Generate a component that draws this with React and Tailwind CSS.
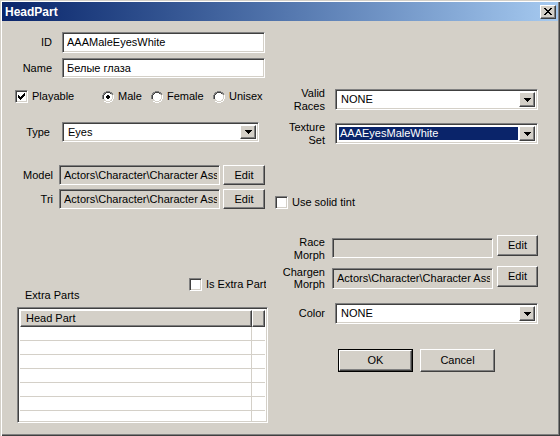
import React from "react";

const sunken =
  "border border-t-[#808080] border-l-[#808080] border-b-white border-r-white shadow-[inset_1px_1px_0_#404040,inset_-1px_-1px_0_#d4d0c8]";
const raised =
  "border border-t-white border-l-white border-b-[#404040] border-r-[#404040] shadow-[inset_-1px_-1px_0_#808080,inset_1px_1px_0_#d4d0c8]";

function TextBox({ className = "", value = "", gray = false }) {
  return (
    <div
      className={`${sunken} ${gray ? "bg-[#d4d0c8]" : "bg-white"} flex items-center pl-[4px] pr-[2px] ${className}`}
    >
      <span className="block w-full overflow-hidden whitespace-nowrap">{value}</span>
    </div>
  );
}

function Arrow() {
  return (
    <svg width="7" height="4" viewBox="0 0 7 4">
      <path d="M0 0h7v1H6v1H5v1H4v1H3V3H2V2H1V1H0z" fill="#000" />
    </svg>
  );
}

function Combo({ className = "", value = "", selected = false }) {
  return (
    <div className={`${sunken} bg-white flex p-[2px] ${className}`}>
      <div className="flex-1 flex items-center overflow-hidden whitespace-nowrap p-[1px]">
        <div
          className={`h-full flex items-center w-full ${selected ? "bg-[#0a246a] text-white pl-[1px]" : "pl-[2px]"}`}
        >
          {value}
        </div>
      </div>
      <div className={`${raised} bg-[#d4d0c8] w-[16px] flex items-center justify-center`}>
        <Arrow />
      </div>
    </div>
  );
}

function Button({ className = "", children, isDefault = false }) {
  if (isDefault) {
    return (
      <div className={`border border-black ${className}`}>
        <div className={`${raised} bg-[#d4d0c8] w-full h-full flex items-center justify-center`}>
          {children}
        </div>
      </div>
    );
  }
  return (
    <div className={`${raised} bg-[#d4d0c8] flex items-center justify-center ${className}`}>
      {children}
    </div>
  );
}

function CheckBox({ checked = false }) {
  return (
    <div className={`${sunken} bg-white w-[13px] h-[13px] shrink-0 flex items-center justify-center`}>
      {checked && (
        <svg width="7" height="7" viewBox="0 0 7 7">
          <path d="M0 2h1v1h1v1h1V3h1V2h1V1h1V0h1v3H6v1H5v1H4v1H3v1H2V6H1V5H0z" fill="#000" />
        </svg>
      )}
    </div>
  );
}

function Radio({ checked = false }) {
  return (
    <svg width="12" height="12" viewBox="0 0 12 12" className="shrink-0">
      <path d="M4 0h4v1h2v1h1v2h-1V3H9V2H8V1H4v1H3v1H2v1H1v4H0V4h1V2h1V1h2z" fill="#808080" />
      <path d="M4 1h4v1h1v1H8V2H4v1H3v1H2v4H1V4h1V3h1V2h1z" fill="#404040" />
      <path d="M11 4h1v4h-1v2h-1v1H8v1H4v-1H2v-1h2v1h4v-1h2V8h1z" fill="#fff" />
      <path d="M10 4h1v4h-1v1H9v1H8v1H4v-1H3v-1h1v1h4V9h1V8h1z" fill="#d4d0c8" />
      <path d="M4 2h4v1h1v1h1v4H9v1H8v1H4V9H3V8H2V4h1V3h1z" fill="#fff" />
      {checked && <path d="M5 4h2v1h1v2H7v1H5V7H4V5h1z" fill="#000" />}
    </svg>
  );
}

function TwoLine({ a, b, className = "", leading = "leading-[13px]" }) {
  return (
    <div className={`w-[53px] text-right shrink-0 ${leading} ${className}`}>
      <div>{a}</div>
      <div>{b}</div>
    </div>
  );
}

export default function App() {
  const rows = [0, 1, 2, 3, 4, 5, 6];
  const path = "Actors\\Character\\Character Ass";
  return (
    <div
      className="w-[560px] h-[436px] bg-[#d4d0c8] p-[2px] flex flex-col text-[11px] text-black shadow-[inset_1px_1px_0_#d4d0c8,inset_2px_2px_0_#fff,inset_-1px_-1px_0_#404040,inset_-2px_-2px_0_#808080] overflow-hidden"
      style={{ fontFamily: '"Liberation Sans", Arial, sans-serif' }}
    >
      {/* Title bar */}
      <div className="h-[19px] shrink-0 bg-gradient-to-r from-[#0a246a] to-[#a6caf0] flex items-center pl-[3px] pr-[2px]">
        <span className="text-white font-bold text-[12px] flex-1">HeadPart</span>
        <div className={`${raised} bg-[#d4d0c8] w-[16px] h-[14px] flex items-center justify-center`}>
          <svg width="8" height="7" viewBox="0 0 8 7">
            <path d="M0 0h2v1h1v1h2V1h1V0h2v1H7v1H6v1H5v1h1v1h1v1h1v1H6V6H5V5H3v1H2v1H0V6h1V5h1V4h1V3H2V2H1V1H0z" fill="#000" />
          </svg>
        </div>
      </div>

      {/* Body */}
      <div className="flex flex-1">
        {/* Left column */}
        <div className="w-[270px] shrink-0 flex flex-col">
          <div className="flex items-center h-[21px] mt-[11px]">
            <span className="w-[50px] text-right shrink-0">ID</span>
            <TextBox className="ml-[10px] w-[203px] h-full" value="AAAMaleEyesWhite" />
          </div>
          <div className="flex items-center h-[20px] mt-[5px]">
            <span className="w-[50px] text-right shrink-0">Name</span>
            <TextBox className="ml-[10px] w-[203px] h-full" value="Белые глаза" />
          </div>
          <div className="flex items-center h-[13px] mt-[12px]">
            <div className="ml-[13px] w-[87px] flex items-center shrink-0">
              <CheckBox checked />
              <span className="ml-[4px]">Playable</span>
            </div>
            <div className="w-[49px] flex items-center shrink-0">
              <Radio checked />
              <span className="ml-[4px]">Male</span>
            </div>
            <div className="w-[62px] flex items-center shrink-0">
              <Radio />
              <span className="ml-[4px]">Female</span>
            </div>
            <div className="flex items-center shrink-0">
              <Radio />
              <span className="ml-[4px]">Unisex</span>
            </div>
          </div>
          <div className="flex items-center h-[20px] mt-[19px]">
            <span className="w-[48px] text-right shrink-0">Type</span>
            <Combo className="ml-[12px] w-[197px] h-full" value="Eyes" />
          </div>
          <div className="flex items-center h-[20px] mt-[23px]">
            <span className="w-[51px] text-right shrink-0">Model</span>
            <TextBox className="ml-[6px] w-[161px] h-full" gray value={path} />
            <Button className="ml-[3px] w-[42px] h-full">Edit</Button>
          </div>
          <div className="flex items-center h-[20px] mt-[4px]">
            <span className="w-[51px] text-right shrink-0">Tri</span>
            <TextBox className="ml-[6px] w-[161px] h-full" gray value={path} />
            <Button className="ml-[3px] w-[42px] h-full">Edit</Button>
          </div>
          <div className="flex items-center h-[13px] mt-[69px]">
            <div className="ml-[187px] flex items-center">
              <CheckBox />
              <span className="ml-[4px] w-[60px] overflow-hidden whitespace-nowrap">Is Extra Part</span>
            </div>
          </div>
          <div className="h-[13px] leading-[13px] mt-[-2px] ml-[23px]">Extra Parts</div>
          <div className={`${sunken} bg-white ml-[15px] mt-[5px] w-[251px] h-[116px] p-[2px] flex flex-col overflow-hidden`}>
            <div className="flex h-[17px] shrink-0">
              <div className={`${raised} bg-[#d4d0c8] w-[232px] flex items-center pl-[5px]`}>Head Part</div>
              <div className={`${raised} bg-[#d4d0c8] flex-1`} />
            </div>
            {rows.map((r) => (
              <div key={r} className="flex h-[14px] shrink-0 border-b border-[#d4d0c8]">
                <div className="w-[232px] border-r border-[#d4d0c8]" />
                <div className="flex-1" />
              </div>
            ))}
          </div>
        </div>

        {/* Right column */}
        <div className="flex-1 flex flex-col">
          <div className="flex items-center h-[21px] mt-[68px]">
            <TwoLine a="Valid" b="Races" />
            <Combo className="ml-[10px] w-[203px] h-full" value="NONE" />
          </div>
          <div className="flex items-center h-[21px] mt-[13px]">
            <TwoLine a="Texture" b="Set" />
            <Combo className="ml-[10px] w-[203px] h-full" value="AAAEyesMaleWhite" selected />
          </div>
          <div className="flex items-center h-[13px] mt-[52px]">
            <div className="ml-[3px] flex items-center">
              <CheckBox />
              <span className="ml-[4px]">Use solid tint</span>
            </div>
          </div>
          <div className="flex items-start mt-[26px]">
            <TwoLine a="Race" b="Morph" className="mt-[1px]" />
            <TextBox className="ml-[7px] mt-[3px] w-[161px] h-[20px]" gray value="" />
            <Button className="ml-[4px] w-[41px] h-[21px]">Edit</Button>
          </div>
          <div className="flex items-start mt-[4px]">
            <TwoLine a="Chargen" b="Morph" leading="leading-[12px]" />
            <TextBox className="ml-[7px] mt-[2px] w-[161px] h-[21px]" gray value={path} />
            <Button className="ml-[4px] w-[41px] h-[21px]">Edit</Button>
          </div>
          <div className="flex items-center h-[21px] mt-[13px]">
            <span className="w-[53px] text-right shrink-0">Color</span>
            <Combo className="ml-[10px] w-[203px] h-full" value="NONE" />
          </div>
          <div className="flex items-center h-[23px] mt-[25px]">
            <Button isDefault className="ml-[66px] w-[75px] h-full">
              OK
            </Button>
            <Button className="ml-[7px] w-[75px] h-full">Cancel</Button>
          </div>
        </div>
      </div>
    </div>
  );
}
